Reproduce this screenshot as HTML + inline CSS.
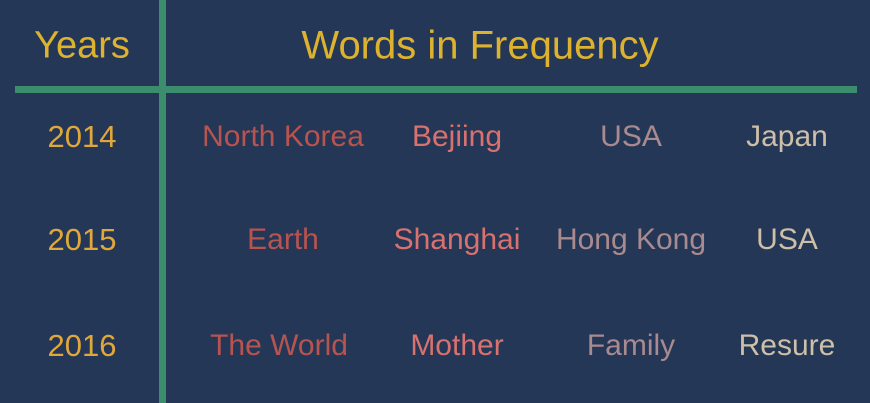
<!DOCTYPE html>
<html><head><meta charset="utf-8"><style>
html,body{margin:0;padding:0;}
body{width:870px;height:403px;background:#253756;position:relative;overflow:hidden;font-family:"Liberation Sans",sans-serif;}
.v{position:absolute;left:159px;top:0;width:7px;height:403px;background:#3b8d6d;}
.h{position:absolute;left:15px;top:86px;width:842px;height:7px;background:#3b8d6d;}
.t{position:absolute;transform:translate(-50%,-50%);white-space:nowrap;}
.hd{font-size:38px;color:#dcb22e;}
.y{font-size:31px;color:#e0a83a;}
.c1{font-size:30px;color:#b85450;}
.c2{font-size:30px;color:#d9716f;}
.c3{font-size:30px;color:#a98a8f;}
.c4{font-size:30px;color:#cdbfa8;}
</style></head><body>
<div class="v"></div><div class="h"></div>
<div class="t hd" style="left:82px;top:46px">Years</div>
<div class="t hd" style="left:480px;top:46px;font-size:40px">Words in Frequency</div>
<div class="t y" style="left:82px;top:137px">2014</div>
<div class="t y" style="left:82px;top:240px">2015</div>
<div class="t y" style="left:82px;top:346px">2016</div>
<div class="t c1" style="left:283px;top:137px">North Korea</div>
<div class="t c2" style="left:457px;top:137px">Bejiing</div>
<div class="t c3" style="left:631px;top:137px">USA</div>
<div class="t c4" style="left:787px;top:137px">Japan</div>
<div class="t c1" style="left:283px;top:240px">Earth</div>
<div class="t c2" style="left:457px;top:240px">Shanghai</div>
<div class="t c3" style="left:631px;top:240px">Hong Kong</div>
<div class="t c4" style="left:787px;top:240px">USA</div>
<div class="t c1" style="left:279px;top:346px">The World</div>
<div class="t c2" style="left:457px;top:346px">Mother</div>
<div class="t c3" style="left:631px;top:346px">Family</div>
<div class="t c4" style="left:787px;top:346px">Resure</div>
</body></html>
